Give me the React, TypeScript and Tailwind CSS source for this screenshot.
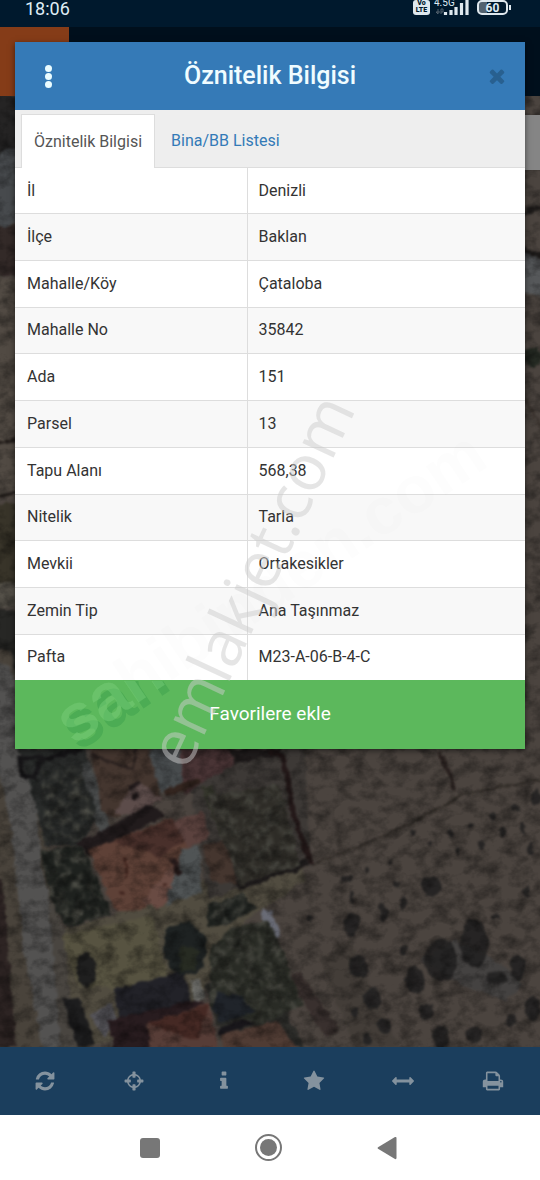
import React from "react";

const rows: [string, string][] = [
  ["İl", "Denizli"],
  ["İlçe", "Baklan"],
  ["Mahalle/Köy", "Çataloba"],
  ["Mahalle No", "35842"],
  ["Ada", "151"],
  ["Parsel", "13"],
  ["Tapu Alanı", "568,38"],
  ["Nitelik", "Tarla"],
  ["Mevkii", "Ortakesikler"],
  ["Zemin Tip", "Ana Taşınmaz"],
  ["Pafta", "M23-A-06-B-4-C"],
];

const glyphs = {
  refresh:
    "M1639 1056q0 5-1 7-64 268-268 434.5t-478 166.5q-146 0-282.5-55t-243.5-157l-129 129q-19 19-45 19t-45-19-19-45v-448q0-26 19-45t45-19h448q26 0 45 19t19 45-19 45l-137 137q71 66 161 102t187 36q134 0 250-65t186-179q11-17 53-117 8-23 30-23h192q13 0 22.5 9.5t9.5 22.5zm25-800v448q0 26-19 45t-45 19h-448q-26 0-45-19t-19-45 19-45l138-138q-148-137-349-137-134 0-250 65t-186 179q-11 17-53 117-8 23-30 23h-199q-13 0-22.5-9.5t-9.5-22.5v-7q65-268 270-434.5t480-166.5q146 0 284 55.5t245 156.5l130-129q19-19 45-19t45 19 19 45z",
  crosshairs:
    "M1325 1024h-109q-26 0-45-19t-19-45v-128q0-26 19-45t45-19h109q-32-108-112.5-188.5t-188.5-112.5v109q0 26-19 45t-45 19h-128q-26 0-45-19t-19-45v-109q-108 32-188.5 112.5t-112.5 188.5h109q26 0 45 19t19 45v128q0 26-19 45t-45 19h-109q32 108 112.5 188.5t188.5 112.5v-109q0-26 19-45t45-19h128q26 0 45 19t19 45v109q108-32 188.5-112.5t112.5-188.5zm339-192v128q0 26-19 45t-45 19h-143q-37 161-154.5 278.5t-278.5 154.5v143q0 26-19 45t-45 19h-128q-26 0-45-19t-19-45v-143q-161-37-278.5-154.5t-154.5-278.5h-143q-26 0-45-19t-19-45v-128q0-26 19-45t45-19h143q37-161 154.5-278.5t278.5-154.5v-143q0-26 19-45t45-19h128q26 0 45 19t19 45v143q161 37 278.5 154.5t154.5 278.5h143q26 0 45 19t19 45z",
  info: "M1216 1344v128q0 26-19 45t-45 19h-512q-26 0-45-19t-19-45v-128q0-26 19-45t45-19h64v-384h-64q-26 0-45-19t-19-45v-128q0-26 19-45t45-19h384q26 0 45 19t19 45v576h64q26 0 45 19t19 45zm-128-1152v192q0 26-19 45t-45 19h-256q-26 0-45-19t-19-45v-192q0-26 19-45t45-19h256q26 0 45 19t19 45z",
  star: "M1728 647q0 22-26 48l-363 354 86 500q1 7 1 20 0 21-10.5 35.5t-30.5 14.5q-19 0-40-12l-449-236-449 236q-22 12-40 12-21 0-31.5-14.5t-10.5-35.5q0-6 2-20l86-500-364-354q-25-27-25-48 0-37 56-46l502-73 225-455q19-41 49-41t49 41l225 455 502 73q56 9 56 46z",
  arrows:
    "M1792 896q0 26-19 45l-256 256q-19 19-45 19t-45-19-19-45v-128h-1024v128q0 26-19 45t-45 19-45-19l-256-256q-19-19-19-45t19-45l256-256q19-19 45-19t45 19 19 45v128h1024v-128q0-26 19-45t45-19 45 19l256 256q19 19 19 45z",
  print:
    "M448 1536h896v-256h-896v256zm0-640h896v-384h-160q-40 0-68-28t-28-68v-160h-640v640zm1152 64q0-26-19-45t-45-19-45 19-19 45 19 45 45 19 45-19 19-45zm128 0v416q0 13-9.5 22.5t-22.5 9.5h-224v160q0 40-28 68t-68 28h-960q-40 0-68-28t-28-68v-160h-224q-13 0-22.5-9.5t-9.5-22.5v-416q0-79 56.5-135.5t135.5-56.5h64v-544q0-40 28-68t68-28h672q40 0 88 20t76 48l152 152q28 28 48 76t20 88v256h64q79 0 135.5 56.5t56.5 135.5z",
  times:
    "M1490 1322q0 40-28 68l-136 136q-28 28-68 28t-68-28l-294-294-294 294q-28 28-68 28t-68-28l-136-136q-28-28-28-68t28-68l294-294-294-294q-28-28-28-68t28-68l136-136q28-28 68-28t68 28l294 294 294-294q28-28 68-28t68 28l136 136q28 28 28 68t-28 68l-294 294 294 294q28 28 28 68z",
};

const tools: [keyof typeof glyphs, string][] = [
  ["refresh", "Yenile"],
  ["crosshairs", "Konum"],
  ["info", "Bilgi"],
  ["star", "Favoriler"],
  ["arrows", "Ölçüm"],
  ["print", "Yazdır"],
];

// x, y, rx, ry of each tree or bush
const trees = [
  [432, 886, 10, 10], [352, 925, 8, 12], [474, 944, 14, 25], [441, 960, 16, 21], [415, 980, 9, 14],
  [358, 967, 10, 11], [372, 998, 9, 11], [384, 1026, 7, 8], [426, 1012, 8, 8], [441, 1037, 8, 12],
  [518, 968, 8, 13], [497, 978, 11, 7], [533, 1008, 8, 12], [511, 1020, 5, 8], [474, 1035, 8, 8],
  [404, 951, 4, 6], [383, 912, 4, 9], [403, 903, 3, 6], [347, 878, 5, 4], [352, 897, 2, 6],
  [309, 918, 4, 4], [367, 870, 2, 3], [390, 862, 2, 3], [413, 832, 3, 3], [451, 834, 3, 4],
  [458, 851, 2, 5], [470, 826, 3, 3], [481, 845, 4, 4], [493, 816, 3, 4], [502, 832, 2, 6],
  [516, 808, 4, 4], [523, 828, 2, 5], [531, 850, 3, 7], [536, 797, 4, 7], [431, 844, 2, 3],
  [397, 884, 3, 3], [526, 892, 3, 5], [496, 917, 4, 3], [356, 1012, 3, 6], [367, 1040, 4, 6],
];

function Glyph({ name, className }: { name: keyof typeof glyphs; className: string }) {
  return (
    <svg viewBox="0 0 1792 1792" className={className} fill="currentColor" aria-hidden="true">
      <path d={glyphs[name]} />
    </svg>
  );
}

function SatelliteMap() {
  return (
    <svg
      viewBox="0 96 540 951"
      preserveAspectRatio="xMidYMid slice"
      className="absolute inset-0 h-full w-full"
      aria-hidden="true"
    >
      <defs>
        <filter id="rough" x="-5%" y="-5%" width="110%" height="110%" colorInterpolationFilters="sRGB">
          <feTurbulence type="fractalNoise" baseFrequency="0.11" numOctaves="3" seed="4" result="n" />
          <feDisplacementMap in="SourceGraphic" in2="n" scale="7" xChannelSelector="R" yChannelSelector="G" />
          <feGaussianBlur stdDeviation="0.9" />
        </filter>
        <filter id="grain" x="0" y="0" width="100%" height="100%" colorInterpolationFilters="sRGB">
          <feTurbulence type="fractalNoise" baseFrequency="0.06 0.08" numOctaves="4" seed="9" />
          <feColorMatrix values="0 0 0 0 0  0 0 0 0 0  0 0 0 0 0  1.5 0 0 0 -0.6" />
        </filter>
        <filter id="clumps" x="0" y="0" width="100%" height="100%" colorInterpolationFilters="sRGB">
          <feTurbulence type="fractalNoise" baseFrequency="0.11" numOctaves="3" seed="21" result="t" />
          <feColorMatrix in="t" values="0 0 0 0 0.32  0 0 0 0 0.32  0 0 0 0 0.29  2.4 0 0 0 -1.05" result="c" />
          <feComposite in="c" in2="SourceGraphic" operator="in" result="d" />
          <feMerge>
            <feMergeNode in="SourceGraphic" />
            <feMergeNode in="d" />
          </feMerge>
        </filter>
      </defs>
      <rect y="96" width="540" height="951" fill="#4b443f" />
      <g filter="url(#rough)">
        <path d="M-10 96h30v50l-30 18z" fill="#252424" />
        <path d="M-10 160l35-18v75l-35 20z" fill="#474a4d" />
        <path d="M-10 226h30v50h-30z" fill="#332a28" />
        <path d="M-10 278h30v220h-30z" fill="#514a43" />
        <path d="M-10 445l30-7M-10 498l30-6" stroke="#211c19" strokeWidth="3" />
        <path d="M-10 503h30v80h-30z" fill="#383429" />
        <path d="M-10 583h30v25h-30z" fill="#555149" />
        <path d="M-10 610h30v70l20 90h-50z" fill="#272725" />
        <path d="M520 250l25 8v40l-25-8z" fill="#56585a" />
        <path d="M515 247l30 10M518 214l25-8" stroke="#1f1c1b" strokeWidth="5" />
        <ellipse cx="533" cy="356" rx="9" ry="10" fill="#252a23" />
        <path d="M515 388q20 20 30 50" stroke="#3a332e" strokeWidth="3" fill="none" />

        <path d="M-10 650h20l24 98 40 300h-84z" fill="#49433b" />
        <path d="M-10 870q18 0 16 60l10 117h-28z" fill="#2d2423" />
        <path d="M-10 660l20 5 22 85 10 120 25 90 17 87H42L22 940 14 850 4 790-10 750z" fill="#535251" />
        <path d="M48 890l20 50 12 60 5 47H60z" fill="#494540" />

        <path d="M64 930l60-18 42-12 60-30 70-15 10 25-60 40-60 100-110 30z" fill="#514c40" />
        <path d="M62 935l90-20 15 60-50 15-40-5z" fill="#575341" />

        <path d="M285 748h20l4 90 4 28-34 8-70 25-20-120z" fill="#3d3936" />
        <path d="M18 748h66l16 60-18 40-36-6z" fill="#292b2a" />
        <path d="M20 758h20l-5 20-13-2zM38 762l45-14" stroke="#181719" strokeWidth="5" fill="none" />
        <path d="M75 770l14-10 22 68-10 8z" fill="#4a4c4c" />
        <path d="M90 748h65l5 48-44 22-14-6z" fill="#44362f" />
        <path d="M90 755l42 15 4-22" stroke="#2b2220" strokeWidth="3" fill="none" />
        <path d="M114 814l22-32 26 16-20 16z" fill="#5c4c4a" />
        <path d="M130 788l8-5M132 798l6-2" stroke="#211a1b" strokeWidth="5" />
        <path d="M148 748h32l5 38-24 8z" fill="#484c4e" />
        <path d="M180 748h50l4 17-50 30z" fill="#493435" />
        <path d="M230 748h50l-4 8-42 8z" fill="#1f1b1b" />

        <path d="M76 844l74-40 14 11-74 42z" fill="#211b1c" />
        <path d="M88 850l83-32 20 30-46 60-28 5z" fill="#5e4137" />
        <path d="M113 841l60-22 14 20-27 18z" fill="#49302b" />
        <path d="M175 821l28-11 6 30-22 8z" fill="#5b423e" />
        <path d="M142 900l42-48 4 28-30 30z" fill="#694b43" />
        <path d="M182 850l18-4 2 45-36 14z" fill="#505455" />
        <path d="M172 858l8 16" stroke="#2a1d1d" strokeWidth="6" />
        <path d="M123 855l5 22M119 893h5M163 885h4" stroke="#40251f" strokeWidth="3" />
        <path d="M200 788l12-2 28 52-16 4z" fill="#34352b" />
        <path d="M165 794l35-14" stroke="#33251f" strokeWidth="7" />
        <path d="M202 845l30-5 5 44-25-2z" fill="#45362f" />

        <path d="M62 997l18 2 15 45-18 5z" fill="#1d1d1e" />
        <path d="M114 990l70-20 8 40-68 25z" fill="#222228" />
        <path d="M190 981l10-2 5 20-10 5z" fill="#6e6e6a" />
        <path d="M90 1015l22-12 4 16-12 18z" fill="#545358" />
        <path d="M108 1020l90-20 10 6-62 20 6 25h-38z" fill="#281c1f" />
        <path d="M146 1023l64-20 8 48h-68z" fill="#573d37" />
        <path d="M146 1023l62-18-10 36z" fill="#452924" />
        <path d="M205 985l60-10 40 72h-80z" fill="#2d2d2a" />
        <path d="M222 1033l56-12 20 30h-75z" fill="#503c34" />
        <path d="M218 1032l45-16" stroke="#18161a" strokeWidth="7" />
        <path d="M300 972l40 58-14 8-40-62z" fill="#39302e" />
        <path d="M262 908l10 4 8 24-10 10-8-22z" fill="#696b75" />

        <path d="M270 750l14 8 10 60 18 46" stroke="#241919" strokeWidth="6" fill="none" />
        <path d="M238 886l70-23" stroke="#1d1a1a" strokeWidth="8" />
        <path d="M312 865l80-32 70-38 80-16" stroke="#322d28" strokeWidth="2" fill="none" />
        <path d="M440 752l15 38" stroke="#29211f" strokeWidth="4" />
      </g>
      <g filter="url(#rough)">
        <g filter="url(#clumps)" fill="#1e211e">
          <path d="M40 850l40-4 12 20 20 48-44 14-16-24z" />
          <path d="M42 772l38-10 16 50-14 30-38 4z" fill="#252726" />
          <path d="M208 905l34-12 14 16-30 16-20 2z" />
          <path d="M205 795l75-10 20 80-60 20z" fill="#2e2c27" />
          <path d="M210 950l20-22 38-8 16 35 18 50-40 20-52-20z" fill="#292b25" />
        </g>
        <path d="M166 928l22-6 18 14-2 32-24 10-16-20z" fill="#1e2222" />
        <path d="M180 946l20 4-6 20-14 2z" fill="#272b22" />
        <ellipse cx="86" cy="970" rx="10" ry="17" fill="#1f1f1f" />
        <path d="M215 992l25 3 15 18-35 10-6-15z" fill="#20242a" />
      </g>
      <g filter="url(#rough)">
        <path d="M420 960l35-20 40 20 30 25-20 16-40-15z" fill="#444241" />
        <path d="M320 960l30-20 50 107h-45z" fill="#3e3934" fillOpacity="0.6" />
        {trees.map(([cx, cy, rx, ry]) => (
          <ellipse key={`${cx}-${cy}`} cx={cx} cy={cy} rx={rx} ry={ry} fill="#222121" fillOpacity="0.9" />
        ))}
      </g>
      <rect y="96" width="540" height="951" filter="url(#grain)" opacity="0.6" />
      <rect x="500" y="115" width="40" height="55" fill="#858585" />
    </svg>
  );
}

function Watermarks() {
  return (
    <svg viewBox="0 0 540 1180" className="pointer-events-none absolute left-0 top-0 w-full" aria-hidden="true">
      <defs>
        <clipPath id="footerArea">
          <rect x="15" y="681" width="155" height="69" />
        </clipPath>
      </defs>
      <g fontFamily="'Liberation Sans', Arial, sans-serif" fontWeight="700" fontSize="66">
        <g clipPath="url(#footerArea)">
          <text transform="translate(79 752) rotate(-34)" fill="#2f9444" fillOpacity="0.35">sahibinden.com</text>
          <text transform="translate(74 746) rotate(-34)" fill="#7fd67f" fillOpacity="0.4">sahibinden.com</text>
        </g>
        <text transform="translate(74 746) rotate(-34)" fill="#808080" fillOpacity="0.015">sahibinden.com</text>
      </g>
      <text
        transform="translate(187 772) rotate(-65)"
        fontFamily="'Open Sans', 'Noto Sans', sans-serif"
        fontSize="64"
        fill="#cccccc"
        fillOpacity="0.5"
      >
        emlakjet.com
      </text>
    </svg>
  );
}

function StatusBar() {
  return (
    <div className="flex h-[27px] items-start justify-between bg-[#00192d] pl-[25px] pr-[29px] text-[#dfecf5]">
      <span className="text-[18px] leading-[18px]">18:06</span>
      <div className="flex items-start gap-1">
        <span className="flex h-[15px] w-[17px] flex-col items-center rounded-[3px] bg-[#dfe8ee] text-[7px] font-black leading-[7px] text-[#00192d]">
          <span>Vo</span>
          <span>LTE</span>
        </span>
        <div className="relative h-[15px] w-[36px]">
          <svg viewBox="0 0 36 15" className="h-[15px] w-[36px]" aria-hidden="true">
            <path d="M11.500 15v-3M17 15v-5M22 15V7M27.500 15V3M33 15V0" stroke="#dfe8ee" strokeWidth="3.200" />
            <path d="M4 9v5l-2-2h4M7 14V9h2v3H7" stroke="#53616d" strokeWidth="1" fill="none" />
          </svg>
          <span className="absolute -top-[2px] left-0 text-[10px] leading-[10px]">4.5G</span>
        </div>
        <div className="flex items-center pl-[3px]">
          <span className="flex h-[15px] w-[31px] items-center justify-center rounded-[5px] border-2 border-[#dfe8ee] bg-linear-to-r from-[#52626f] from-30% to-[#00192d] to-30% text-[12px] font-bold leading-[12px]">
            60
          </span>
          <span className="ml-px h-[5px] w-[2px] bg-[#dfe8ee]" />
        </div>
      </div>
    </div>
  );
}

function AttributeDialog() {
  return (
    <section
      role="dialog"
      aria-label="Öznitelik Bilgisi"
      className="absolute inset-x-[15px] top-[42px] bg-white shadow-[0_2px_6px_rgba(0,0,0,0.5)]"
    >
      <header className="flex h-[68px] items-center bg-[#357ab7] px-[17px] text-white">
        <button type="button" aria-label="Menü" className="flex w-8 flex-col items-center gap-px">
          <span className="h-[7px] w-[7px] rounded-full bg-[#eafcff]" />
          <span className="h-[7px] w-[7px] rounded-full bg-[#eafcff]" />
          <span className="h-[7px] w-[7px] rounded-full bg-[#eafcff]" />
        </button>
        <h1 className="flex-1 text-center text-[25px] font-medium leading-8 text-[#f0fcff]">Öznitelik Bilgisi</h1>
        <button type="button" aria-label="Kapat" className="flex w-8 justify-end text-[#286090]">
          <Glyph name="times" className="h-[22px] w-[22px]" />
        </button>
      </header>
      <div
        role="tablist"
        className="flex h-[58px] items-end border-b border-[#dddddd] bg-[#eeeeee] px-[6px] text-[16px]"
      >
        <button
          type="button"
          role="tab"
          aria-selected="true"
          className="-mb-px h-[54px] border border-b-0 border-[#dddddd] bg-white px-[12px] text-[#555555]"
        >
          Öznitelik Bilgisi
        </button>
        <button type="button" role="tab" aria-selected="false" className="h-[52px] px-[16px] text-[#337ab7]">
          Bina/BB Listesi
        </button>
      </div>
      <table className="h-[512px] w-full border-collapse text-[16px] leading-5 text-[#333333]">
        <tbody>
          {rows.map(([label, value], i) => (
            <tr key={label} className={i % 2 ? "bg-[#f8f8f8]" : "bg-white"}>
              <th
                scope="row"
                className={`w-[232px] border-r border-[#dddddd] px-[12px] text-left font-normal ${i ? "border-t" : ""}`}
              >
                {label}
              </th>
              <td className={`border-[#dddddd] px-[11px] ${i ? "border-t" : ""}`}>{value}</td>
            </tr>
          ))}
        </tbody>
      </table>
      <button type="button" className="block h-[69px] w-full bg-[#5cb85c] text-[19px] text-white">
        Favorilere ekle
      </button>
    </section>
  );
}

export default function App() {
  return (
    <div className="relative flex min-h-screen flex-col bg-white font-['Roboto',sans-serif]">
      <StatusBar />
      <div className="flex h-[69px] bg-[#000f1c]">
        <div className="w-[69px] bg-[#853c18]" />
      </div>
      <main className="relative min-h-[660px] flex-1 overflow-hidden bg-[#4b443f]">
        <SatelliteMap />
      </main>
      <nav className="grid h-[68px] grid-cols-6 bg-[#1b3e5d] pr-[2px] text-[#84929e]">
        {tools.map(([name, label]) => (
          <button key={name} type="button" aria-label={label} className="flex items-center justify-center">
            <Glyph name={name} className="h-[22px] w-[22px]" />
          </button>
        ))}
      </nav>
      <div className="flex h-[65px] items-center justify-center gap-[95px] bg-white pr-[3px] text-[#777777]">
        <button type="button" aria-label="Son uygulamalar" className="h-[20px] w-[20px] rounded-[3px] bg-[#777777]" />
        <button
          type="button"
          aria-label="Ana ekran"
          className="flex h-[27px] w-[27px] items-center justify-center rounded-full border-2 border-[#777777]"
        >
          <span className="h-[17px] w-[17px] rounded-full bg-[#777777]" />
        </button>
        <button type="button" aria-label="Geri">
          <svg viewBox="0 0 20 24" className="h-[24px] w-[20px]" fill="currentColor" aria-hidden="true">
            <path d="M1 11.200Q0 12 1 12.800L18 23Q19.500 23.500 19.500 22V2Q19.500.500 18 1Z" />
          </svg>
        </button>
      </div>
      <AttributeDialog />
      <Watermarks />
    </div>
  );
}
